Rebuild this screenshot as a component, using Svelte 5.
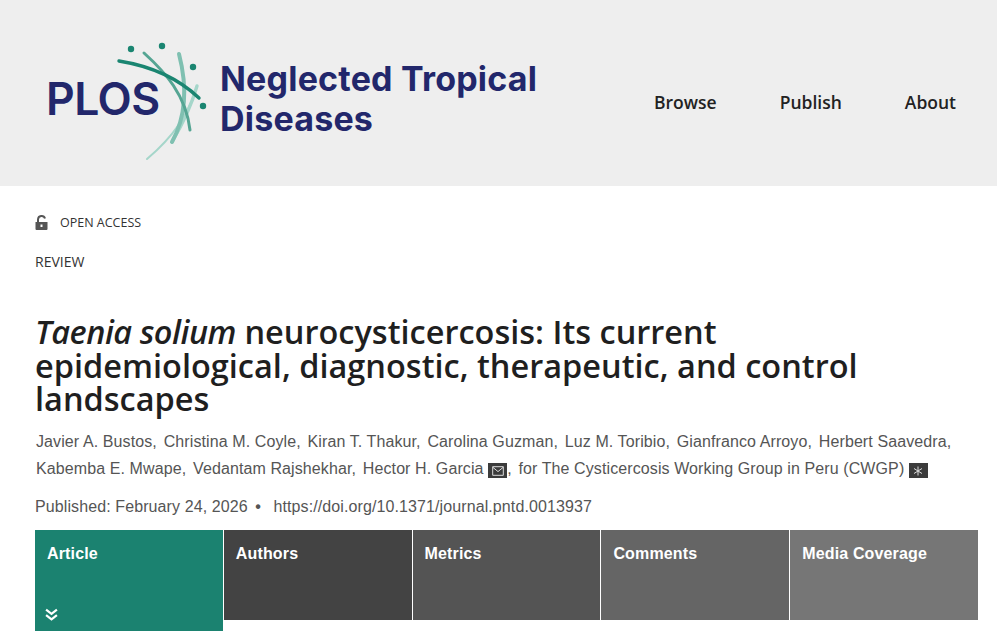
<script>
  const authors = ['Javier A. Bustos','Christina M. Coyle','Kiran T. Thakur','Carolina Guzman','Luz M. Toribio','Gianfranco Arroyo','Herbert Saavedra'];
  const tabs = [
    { label: 'Authors', cls: 't1' },
    { label: 'Metrics', cls: 't2' },
    { label: 'Comments', cls: 't3' },
    { label: 'Media Coverage', cls: 't4' }
  ];
</script>

<div class="page">
  <header class="head">
    <div class="logo">
      <span class="plos">PLOS</span>
      <svg class="mark" viewBox="115 40 95 125" width="95" height="125" aria-hidden="true">
        <g fill="none" stroke-linecap="round">
          <path d="M197 86C190 112 172 138 147 159" stroke="#a5d6ca" stroke-width="2"/>
          <path d="M197 86C193 100 186 118 172 142" stroke="#a5d6ca" stroke-width="3.4"/>
          <path d="M179 54C187 85 187 115 172 142" stroke="#7fc0b1" stroke-width="4"/>
          <path d="M144 53C165 72 186 95 190 130" stroke="#55a593" stroke-width="3"/>
          <path d="M119 61C150 66 178 78 199 98" stroke="#1a8571" stroke-width="3.4"/>
        </g>
        <g fill="#1a8571">
          <circle cx="131" cy="49" r="3.2"/><circle cx="162" cy="46" r="3.2"/><circle cx="193" cy="67" r="3.2"/><circle cx="203" cy="106" r="3.2"/>
        </g>
      </svg>
      <span class="journal">Neglected Tropical<br>Diseases</span>
    </div>
    <nav class="nav"><span>Browse</span><span>Publish</span><span>About</span></nav>
  </header>

  <main class="main">
    <div class="oa">
      <svg viewBox="0 0 14 15" width="14" height="15" aria-hidden="true">
        <path d="M3 7V4.5a3.6 3.6 0 0 1 7-1" fill="none" stroke="#555" stroke-width="2"/>
        <path fill-rule="evenodd" d="M.5 7h12v7a1 1 0 0 1-1 1h-10a1 1 0 0 1-1-1zM5.5 9.5v2.5h2V9.5z" fill="#555"/>
      </svg>
      <span>OPEN ACCESS</span>
    </div>
    <div class="type">REVIEW</div>
    <h1><em>Taenia solium</em> neurocysticercosis: Its current epidemiological, diagnostic, therapeutic, and control landscapes</h1>
    <p class="authors">
      {#each authors as a}<span class="au">{a},</span>{/each}<br>
      <span class="au">Kabemba E. Mwape,</span><span class="au">Vedantam Rajshekhar,</span><span class="au">Hector H. Garcia <i class="badge"><svg viewBox="0 0 12 10" width="12" height="10"><path d="M.7.7h10.6v8.6H.7zM.7 1.2 6 5.6l5.3-4.4" fill="none" stroke="#ddd" stroke-width="1"/></svg></i>,</span><span class="au">for The Cysticercosis Working Group in Peru (CWGP) <i class="badge"><svg viewBox="0 0 10 10" width="10" height="10"><path d="M5 .5v9M1 2.5l8 5M9 2.5l-8 5" fill="none" stroke="#ddd" stroke-width="1"/></svg></i></span>
    </p>
    <p class="pub">Published: February 24, 2026 <b>•</b> https://doi.org/10.1371/journal.pntd.0013937</p>
    <div class="tabs">
      <div class="tab active">
        <span>Article</span>
        <svg viewBox="0 0 12 12" width="13" height="13" aria-hidden="true"><path d="M1 1.5 6 5.5l5-4M1 6.5l5 4 5-4" fill="none" stroke="#fff" stroke-width="2"/></svg>
      </div>
      {#each tabs as t}<div class="tab {t.cls}"><span>{t.label}</span></div>{/each}
    </div>
  </main>
</div>

<style>
  :global(body) { margin: 0; background: #fff; overflow: hidden; }
  .page { width: 997px; height: 638px; overflow: hidden; }
  .head { height: 186px; background: #eee; display: flex; justify-content: space-between; align-items: flex-start; box-sizing: border-box; padding: 0 41px 0 48px; }
  .logo { display: flex; align-items: flex-start; height: 186px; }
  .plos { font: 600 44.5px/1 Inter, sans-serif; color: #22276b; margin: 77px 0 0 -2px; letter-spacing: -0.5px; width: 114px; flex: none; }
  .mark { margin: 40px 0 0 -45px; flex: none; }
  .journal { font: 700 34px/40px Inter, sans-serif; color: #22276b; margin: 59px 0 0 10px; letter-spacing: 0.2px; white-space: nowrap; }
  .nav { display: flex; gap: 63px; font: 600 17.5px/1 "Open Sans", sans-serif; color: #222; margin-top: 94px; }
  .main { padding: 0 19px 0 35px; }
  .oa { display: flex; align-items: center; gap: 11px; height: 16px; margin-top: 29px; font: 12.5px/16px "Open Sans", sans-serif; color: #333; }
  .oa svg { margin-top: -2px; }
  .type { font: 14px/16px "Open Sans", sans-serif; color: #333; margin-top: 23px; }
  h1 { font: 600 32.5px/33.6px "Open Sans", sans-serif; color: #1f1f1f; margin: 45px 0 0; width: 880px; }
  h1 em { letter-spacing: -0.5px; }
  .authors { margin: 12px 0 0 1px; font: 16px/27px "Liberation Sans", sans-serif; letter-spacing: 0.1px; color: #555; white-space: nowrap; }
  .au { margin-right: 6.8px; }
  .badge { display: inline-flex; align-items: center; justify-content: center; width: 19px; height: 15px; background: #3c3c3c; vertical-align: -2px; }
  .pub { margin: 14px 0 0; font: 16px/22px "Liberation Sans", sans-serif; letter-spacing: 0.1px; color: #555; white-space: nowrap; }
  .pub b { margin: 0 8px 0 3px; }
  .tabs { display: flex; align-items: flex-start; gap: 1px; margin-top: 12px; height: 101px; }
  .tab { flex: 1 1 0; height: 90px; box-sizing: border-box; padding: 14px 12px; font: 700 16px/19px "Liberation Sans", sans-serif; letter-spacing: 0.15px; color: #fff; position: relative; }
  .active { background: #1b8270; height: 101px; }
  .active svg { position: absolute; left: 10px; bottom: 10px; }
  .t1 { background: #434343; }
  .t2 { background: #545454; }
  .t3 { background: #656565; }
  .t4 { background: #767676; }
</style>
